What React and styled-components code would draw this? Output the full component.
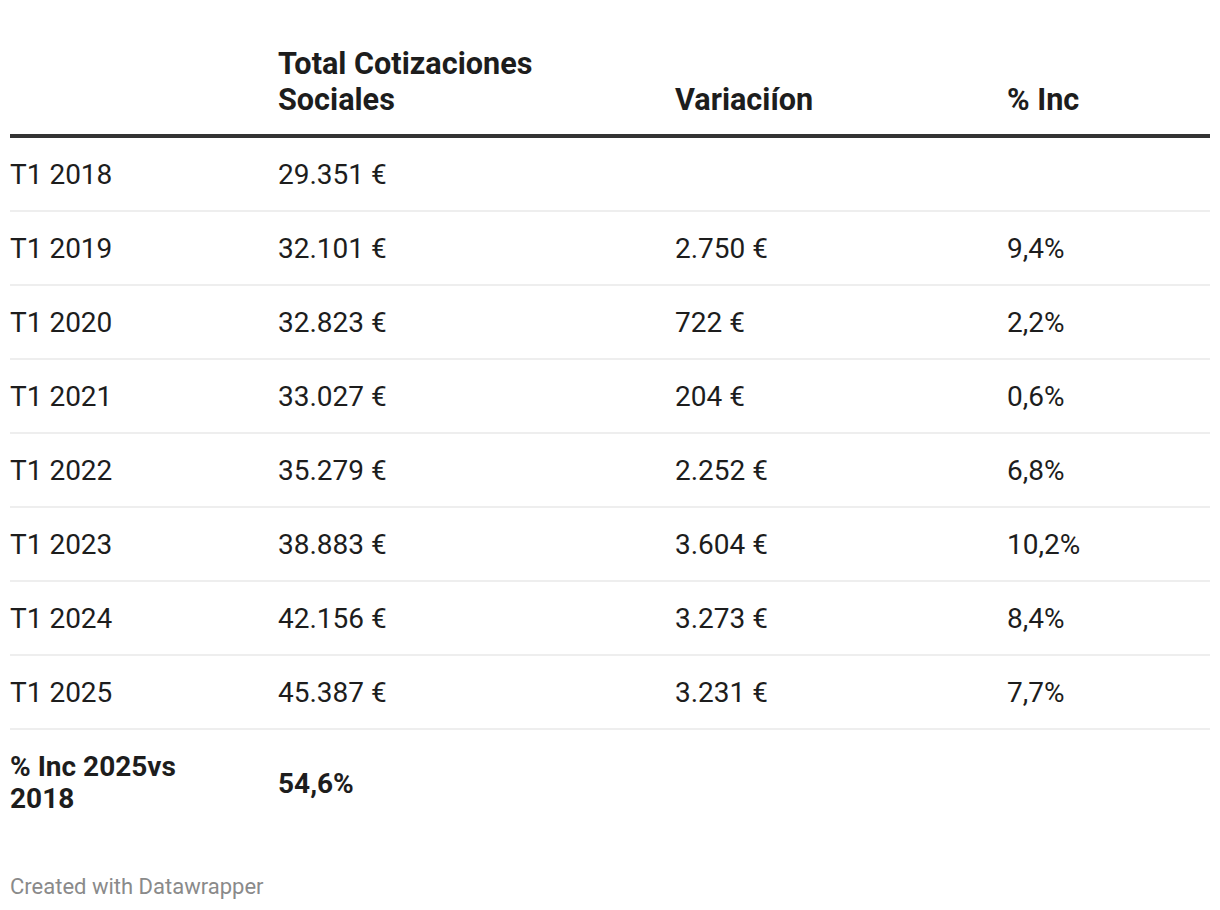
import React from "react";
import styled, { createGlobalStyle } from "styled-components";

const Global = createGlobalStyle`
  html, body { margin: 0; padding: 0; background: #ffffff; }
  body { font-family: Roboto, "Liberation Sans", Arial, sans-serif; color: #1d1d1d; }
`;

const Page = styled.div`
  padding: 46px 10px 0 10px;
  width: 1200px;
`;

const Table = styled.table`
  width: 1200px;
  border-collapse: collapse;
  table-layout: fixed;
  font-size: 28px;
`;

const Col = styled.col`
  width: ${(p) => p.$w}px;
`;

const HeadCell = styled.th`
  text-align: left;
  vertical-align: bottom;
  font-weight: 700;
  font-size: 30.6px;
  line-height: 36px;
  padding: 0 ${(p) => p.$pr || 20}px 16px 0;
  border-bottom: 4px solid #333333;
  color: #1d1d1d;
`;

const Row = styled.tr`
  border-bottom: ${(p) => (p.$last ? "none" : "2px solid #eeeeee")};
`;

const Cell = styled.td`
  padding: ${(p) => (p.$total ? "21px 40px 21px 0" : "19px 20px 17px 0")};
  line-height: ${(p) => (p.$total ? "32px" : "36px")};
  font-weight: ${(p) => (p.$bold ? 700 : 400)};
  vertical-align: middle;
  color: #1d1d1d;
  white-space: ${(p) => (p.$total ? "normal" : "nowrap")};
`;

const Footer = styled.div`
  margin-top: 38px;
  font-size: 22px;
  line-height: 26px;
  color: #8a8a8a;
`;

const rows = [
  ["T1 2018", "29.351 €", "", ""],
  ["T1 2019", "32.101 €", "2.750 €", "9,4%"],
  ["T1 2020", "32.823 €", "722 €", "2,2%"],
  ["T1 2021", "33.027 €", "204 €", "0,6%"],
  ["T1 2022", "35.279 €", "2.252 €", "6,8%"],
  ["T1 2023", "38.883 €", "3.604 €", "10,2%"],
  ["T1 2024", "42.156 €", "3.273 €", "8,4%"],
  ["T1 2025", "45.387 €", "3.231 €", "7,7%"],
];

export default function App() {
  return (
    <>
      <Global />
      <Page>
        <Table>
          <colgroup>
            <Col $w={268} />
            <Col $w={397} />
            <Col $w={332} />
            <Col $w={203} />
          </colgroup>
          <thead>
            <tr>
              <HeadCell></HeadCell>
              <HeadCell $pr={90}>Total Cotizaciones Sociales</HeadCell>
              <HeadCell>Variaciíon</HeadCell>
              <HeadCell>% Inc</HeadCell>
            </tr>
          </thead>
          <tbody>
            {rows.map((r) => (
              <Row key={r[0]}>
                {r.map((c, i) => (
                  <Cell key={i}>{c}</Cell>
                ))}
              </Row>
            ))}
            <Row $last>
              <Cell $bold $total>% Inc 2025vs 2018</Cell>
              <Cell $bold>54,6%</Cell>
              <Cell></Cell>
              <Cell></Cell>
            </Row>
          </tbody>
        </Table>
        <Footer>Created with Datawrapper</Footer>
      </Page>
    </>
  );
}
